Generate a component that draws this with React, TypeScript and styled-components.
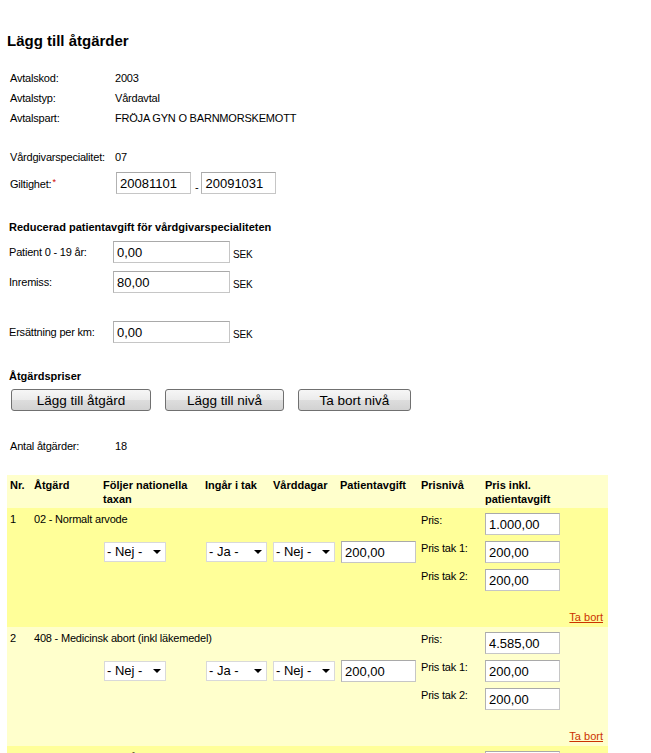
import styled, { createGlobalStyle } from "styled-components";

type Item = {
  nr: number;
  name: string;
  national: string;
  ceiling: string;
  careDays: string;
  fee: string;
  prices: string[];
};

const items: Item[] = [
  { nr: 1, name: "02 - Normalt arvode", national: "- Nej -", ceiling: "- Ja -", careDays: "- Nej -", fee: "200,00", prices: ["1.000,00", "200,00", "200,00"] },
  { nr: 2, name: "408 - Medicinsk abort (inkl läkemedel)", national: "- Nej -", ceiling: "- Ja -", careDays: "- Nej -", fee: "200,00", prices: ["4.585,00", "200,00", "200,00"] },
  { nr: 3, name: "403 - Abort kirurgisk åtgärd", national: "- Nej -", ceiling: "- Ja -", careDays: "- Nej -", fee: "200,00", prices: ["3.460,00", "200,00", "200,00"] },
];

const levels = ["Pris:", "Pris tak 1:", "Pris tak 2:"];

export default () => {
  return (
    <Page>
      <GlobalStyle />
      <Title>Lägg till åtgärder</Title>

      <InfoList>
        <InfoRow>
          <span>Avtalskod:</span>
          <span>2003</span>
        </InfoRow>
        <InfoRow>
          <span>Avtalstyp:</span>
          <span>Vårdavtal</span>
        </InfoRow>
        <InfoRow>
          <span>Avtalspart:</span>
          <span>FRÖJA GYN O BARNMORSKEMOTT</span>
        </InfoRow>
        <InfoRow gap={19}>
          <span>Vårdgivarspecialitet:</span>
          <span>07</span>
        </InfoRow>
        <DateRow>
          <span>
            Giltighet:<Required>*</Required>
          </span>
          <DateFields>
            <TextInput width={75} defaultValue="20081101" />
            <Dash>-</Dash>
            <TextInput width={75} defaultValue="20091031" />
          </DateFields>
        </DateRow>
      </InfoList>

      <SectionTitle gap={23}>Reducerad patientavgift för vårdgivarspecialiteten</SectionTitle>
      <FeeRow gap={3}>
        <span>Patient 0 - 19 år:</span>
        <TextInput width={117} defaultValue="0,00" />
        <Unit>SEK</Unit>
      </FeeRow>
      <FeeRow gap={7}>
        <span>Inremiss:</span>
        <TextInput width={117} defaultValue="80,00" />
        <Unit>SEK</Unit>
      </FeeRow>
      <FeeRow gap={27}>
        <span>Ersättning per km:</span>
        <TextInput width={117} defaultValue="0,00" />
        <Unit>SEK</Unit>
      </FeeRow>

      <SectionTitle gap={23}>Åtgärdspriser</SectionTitle>
      <ButtonBar>
        <Button width={140}>Lägg till åtgärd</Button>
        <Button width={119}>Lägg till nivå</Button>
        <Button width={113}>Ta bort nivå</Button>
      </ButtonBar>

      <CountRow>
        <span>Antal åtgärder:</span>
        <span>18</span>
      </CountRow>

      <Table>
        <TableHeader>
          <span>Nr.</span>
          <span>Åtgärd</span>
          <span>Följer nationella taxan</span>
          <span>Ingår i tak</span>
          <span>Vårddagar</span>
          <span>Patientavgift</span>
          <span>Prisnivå</span>
          <span>Pris inkl. patientavgift</span>
          <span />
        </TableHeader>
        {items.map((item, i) => (
          <ItemRow key={item.nr} odd={i % 2 === 0}>
            <Cell>{item.nr}</Cell>
            <NameCell>{item.name}</NameCell>
            <CenterCell>
              <FakeSelect width={62}>{item.national}</FakeSelect>
            </CenterCell>
            <CenterCell>
              <FakeSelect width={61}>{item.ceiling}</FakeSelect>
            </CenterCell>
            <CenterCell shift={-1}>
              <FakeSelect width={62}>{item.careDays}</FakeSelect>
            </CenterCell>
            <CenterCell>
              <TextInput width={75} defaultValue={item.fee} />
            </CenterCell>
            <LevelCell>
              {levels.map((l) => (
                <span key={l}>{l}</span>
              ))}
            </LevelCell>
            <PriceCell>
              {item.prices.map((p, j) => (
                <TextInput key={j} width={75} defaultValue={p} />
              ))}
            </PriceCell>
            <span />
            <RowFooter>
              <RemoveLink href="#">Ta bort</RemoveLink>
            </RowFooter>
          </ItemRow>
        ))}
      </Table>
    </Page>
  );
};

const FakeSelect = ({ width, children }: { width: number; children: string }) => (
  <SelectBox width={width}>
    <span>{children}</span>
    <Arrow />
  </SelectBox>
);

//STYLED COMPONENTS

const GlobalStyle = createGlobalStyle`
  html, body {
    margin: 0;
    overflow: hidden;
    background: #fff;
  }
  body {
    font-family: "Liberation Sans", Arial, sans-serif;
    font-size: 11px;
    color: #000;
  }
`;

const Page = styled.div`
  padding: 32px 0 40px 7px;
`;

const Title = styled.h1`
  margin: 0;
  font-size: 15px;
  line-height: 18px;
  font-weight: bold;
`;

const InfoList = styled.div`
  margin-top: 18px;
  padding-left: 3px;
  display: flex;
  flex-direction: column;
`;

const InfoRow = styled.div<{ gap?: number }>`
  display: grid;
  grid-template-columns: 105px auto;
  height: 20px;
  align-items: center;
  letter-spacing: -0.2px;
  margin-top: ${({ gap }) => gap || 0}px;
`;

const DateRow = styled.div`
  display: grid;
  grid-template-columns: 106px auto;
  height: 22px;
  align-items: center;
  margin-top: 5px;
  letter-spacing: -0.2px;
`;

const Required = styled.sup`
  color: #d00000;
  font-size: 9px;
  vertical-align: 3px;
  margin-left: 1px;
`;

const DateFields = styled.div`
  display: flex;
  align-items: center;
`;

const Dash = styled.span`
  align-self: flex-end;
  margin: 0 3px 0 4px;
  line-height: 14px;
  font-size: 11px;
`;

const TextInput = styled.input<{ width: number }>`
  box-sizing: border-box;
  width: ${({ width }) => width}px;
  height: 22px;
  margin: 0;
  padding: 1px 3px 0;
  border: 1px solid #c6c6c6;
  border-top-color: #a9a9a9;
  border-left-color: #b2b2b2;
  background: #fff;
  font-family: "Liberation Sans", Arial, sans-serif;
  font-size: 13px;
  color: #000;
  outline: none;
`;

const SectionTitle = styled.div<{ gap: number }>`
  margin-top: ${({ gap }) => gap}px;
  padding-left: 2px;
  height: 20px;
  line-height: 20px;
  font-weight: bold;
`;

const FeeRow = styled.div<{ gap: number }>`
  display: grid;
  grid-template-columns: 104px 117px auto;
  align-items: center;
  height: 23px;
  padding-left: 2px;
  margin-top: ${({ gap }) => gap}px;
  letter-spacing: -0.2px;
`;

const Unit = styled.span`
  align-self: flex-end;
  margin-left: 3px;
  font-size: 10px;
  line-height: 14px;
  padding-bottom: 1px;
`;

const ButtonBar = styled.div`
  display: flex;
  gap: 14px;
  margin-top: 3px;
  padding-left: 4px;
`;

const Button = styled.button<{ width: number }>`
  width: ${({ width }) => width}px;
  height: 22px;
  padding: 0;
  border: 1px solid #707070;
  border-radius: 3px;
  background: linear-gradient(#f6f6f6 0%, #ebebeb 50%, #dddddd 51%, #d2d2d2 100%);
  font-family: "Liberation Sans", Arial, sans-serif;
  font-size: 13.5px;
  color: #000;
  cursor: pointer;
`;

const CountRow = styled.div`
  display: grid;
  grid-template-columns: 105px auto;
  height: 20px;
  align-items: center;
  margin-top: 25px;
  padding-left: 3px;
  letter-spacing: -0.2px;
`;

const columns = "24px 69px 102px 68px 67px 81px 64px 84px 42px";

const Table = styled.div`
  margin-top: 19px;
  width: 601px;
  display: flex;
  flex-direction: column;
`;

const TableHeader = styled.div`
  display: grid;
  grid-template-columns: ${columns};
  align-items: start;
  height: 33px;
  box-sizing: border-box;
  padding-top: 3px;
  background: #ffffcc;
  font-weight: bold;
  line-height: 14px;
  span {
    padding: 0 3px;
  }
`;

const ItemRow = styled.div<{ odd: boolean }>`
  display: grid;
  grid-template-columns: ${columns};
  padding-top: 4px;
  background: ${({ odd }) => (odd ? "#ffff99" : "#ffffcc")};
  line-height: 14px;
`;

const Cell = styled.div`
  padding: 0 3px;
  letter-spacing: -0.2px;
`;

const NameCell = styled(Cell)`
  white-space: nowrap;
  overflow: visible;
`;

const CenterCell = styled.div<{ shift?: number }>`
  align-self: center;
  display: flex;
  padding-left: ${({ shift }) => 4 + (shift || 0)}px;
`;

const LevelCell = styled.div`
  display: flex;
  flex-direction: column;
  gap: 14px;
  padding: 1px 3px 0;
  letter-spacing: -0.2px;
`;

const PriceCell = styled.div`
  display: flex;
  flex-direction: column;
  gap: 6px;
  padding: 1px 0 0 3px;
`;

const RowFooter = styled.div`
  grid-column: 1 / -1;
  text-align: right;
  padding: 19px 5px 3px 0;
`;

const RemoveLink = styled.a`
  color: #cc3300;
  text-decoration: underline;
`;

const SelectBox = styled.div<{ width: number }>`
  box-sizing: border-box;
  width: ${({ width }) => width}px;
  height: 20px;
  display: flex;
  align-items: center;
  justify-content: space-between;
  padding: 0 4px 0 2px;
  border: 1px solid #d9d9d9;
  background: #fff;
  font-size: 13px;
  line-height: 16px;
`;

const Arrow = styled.span`
  width: 0;
  height: 0;
  border-left: 4px solid transparent;
  border-right: 4px solid transparent;
  border-top: 4px solid #000;
  margin-top: 1px;
`;
